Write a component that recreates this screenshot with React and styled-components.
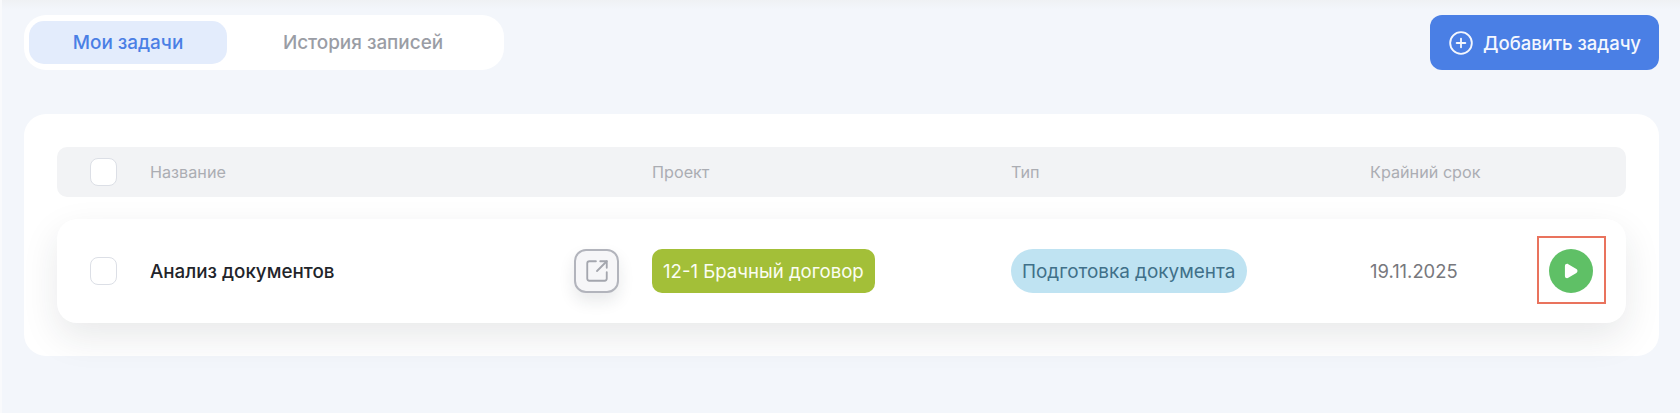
import React from "react";
import styled, { createGlobalStyle } from "styled-components";
import { CirclePlus, SquareArrowOutUpRight } from "lucide-react";

const Global = createGlobalStyle`
  html, body { margin: 0; padding: 0; background: #f3f6fb; }
  * { box-sizing: border-box; }
`;
const Page = styled.div`
  width: 1680px; height: 413px; overflow: hidden;
  padding: 15px 21px 0 24px;
  background: linear-gradient(180deg, #eff1f4 0, #f3f6fb 9px);
  box-shadow: inset 2px 0 0 #f9fafc;
  font-family: Inter, "Noto Sans", sans-serif;
`;
const Toolbar = styled.div`
  display: flex; justify-content: space-between; align-items: stretch;
  height: 55px; margin-bottom: 44px;
`;
const Tabs = styled.div`
  display: flex; align-items: stretch; width: 480px; padding: 6px 5px;
  background: #fff; border-radius: 22px;
`;
const Tab = styled.div`
  display: flex; align-items: center; justify-content: center;
  width: ${p => (p.$active ? "198px" : "auto")};
  flex: ${p => (p.$active ? "none" : "1")};
  border-radius: 15px; font-size: 18.9px; font-weight: 500;
  color: ${p => (p.$active ? "#4a7fe5" : "#9a9da5")};
  background: ${p => (p.$active ? "#e3ecfc" : "transparent")};
`;
const AddButton = styled.div`
  display: flex; align-items: center; justify-content: center; gap: 9px;
  width: 229px; border-radius: 12px; background: #4a7fe5;
  color: #f4f7fe; font-size: 18.5px; font-weight: 500;
`;
const Panel = styled.div`
  height: 242px; padding: 33px; background: #fff; border-radius: 22px;
`;
const Columns = styled.div`
  display: grid; align-items: center;
  grid-template-columns: 60px 502px 359px 359px 1fr auto;
  padding: 0 33px;
`;
const HeaderRow = styled(Columns)`
  height: 50px; margin-bottom: 22px; background: #f2f3f5; border-radius: 10px;
  color: #abadb3; font-size: 16.2px;
`;
const TaskRow = styled(Columns)`
  height: 104px; background: #fff; border-radius: 20px;
  box-shadow: 0 14px 36px rgba(30, 35, 50, 0.1);
`;
const Check = styled.div`
  width: 27px; height: 28px; background: #fff;
  border: 1.5px solid #dcdfe6; border-radius: 8px;
`;
const NameCell = styled.div`
  display: flex; align-items: center; justify-content: space-between;
  padding-right: 33px;
`;
const TaskName = styled.span`
  font-size: 18.8px; font-weight: 450; line-height: 24px; padding-top: 2px; color: #22242a;
`;
const LinkButton = styled.div`
  display: flex; align-items: center; justify-content: center;
  width: 45px; height: 44px; color: #a4a6ae;
  background: #f6f6f8; border: 2px solid #b2b4bc; border-radius: 12px;
  box-shadow: 0 8px 16px rgba(30, 35, 50, 0.1);
`;
const Badge = styled.span`
  display: inline-flex; align-items: center; height: 44px; width: ${p => p.$w};
  padding: 0 11px; white-space: nowrap; font-size: ${p => p.$size};
  border-radius: ${p => p.$radius}; background: ${p => p.$bg}; color: ${p => p.$fg};
`;
const DateText = styled.span`
  font-size: 18.4px; color: #77787d;
`;
const PlayButton = styled.div`
  position: relative; display: flex; align-items: center; justify-content: center;
  width: 44px; height: 44px; border-radius: 50%; background: #5fc066;
  &::after {
    content: ""; position: absolute; top: -13px; left: -12px; right: -13px; bottom: -11px;
    border: 2px solid #e9735d;
  }
`;

export default function App() {
  return (
    <Page>
      <Global />
      <Toolbar>
        <Tabs>
          <Tab $active>Мои задачи</Tab>
          <Tab>История записей</Tab>
        </Tabs>
        <AddButton>
          <CirclePlus size={26} strokeWidth={1.7} />
          Добавить задачу
        </AddButton>
      </Toolbar>
      <Panel>
        <HeaderRow>
          <Check />
          <span>Название</span>
          <span>Проект</span>
          <span>Тип</span>
          <span>Крайний срок</span>
        </HeaderRow>
        <TaskRow>
          <Check />
          <NameCell>
            <TaskName>Анализ документов</TaskName>
            <LinkButton><SquareArrowOutUpRight size={26} strokeWidth={1.7} /></LinkButton>
          </NameCell>
          <div><Badge $w="223px" $size="18.6px" $radius="10px" $bg="#a3bf38" $fg="#fbfdf2">12-1 Брачный договор</Badge></div>
          <div><Badge $w="236px" $size="18.9px" $radius="22px" $bg="#bfe3f2" $fg="#3f7089">Подготовка документа</Badge></div>
          <DateText>19.11.2025</DateText>
          <PlayButton>
            <svg width="18" height="18" viewBox="0 0 16 16" aria-hidden="true">
              <path d="M2.6 3.6c0-1.6 1.6-2.5 3-1.7l7.2 4.4c1.3.8 1.3 2.6 0 3.4l-7.2 4.4c-1.4.8-3-.1-3-1.7z" fill="#fff" />
            </svg>
          </PlayButton>
        </TaskRow>
      </Panel>
    </Page>
  );
}
